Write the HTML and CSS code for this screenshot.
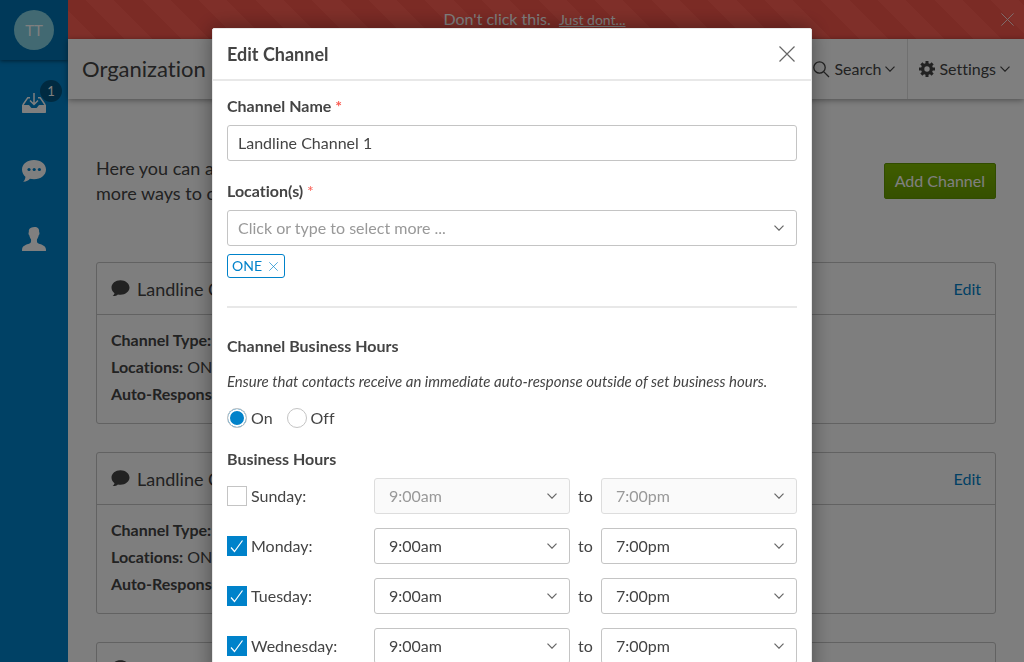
FILE: index.html
```html
<!DOCTYPE html>
<html lang="en">
<head>
<meta charset="utf-8">
<meta name="viewport" content="width=device-width, initial-scale=1">
<title>Edit Channel</title>
<link rel="stylesheet" href="styles.css">
</head>
<body>
<svg class="sprite" aria-hidden="true">
  <symbol id="chevron" viewBox="0 0 10 6"><path d="M.5 .6 5 5.2 9.500 .6" fill="none" stroke="currentColor" stroke-width="1.200"/></symbol>
  <symbol id="cross" viewBox="0 0 16 16"><path d="M.5 .5l15 15M15.500 .5l-15 15" fill="none" stroke="currentColor" stroke-width="1.200"/></symbol>
  <symbol id="bubble" viewBox="0 0 18 17"><path d="M9 .2C4 .2 0 3.400 0 7.600c0 2.300 1.200 4.300 3 5.600-.2 1.200-.9 2.200-1.900 2.800 2 .3 4-.4 5.300-1.500.8.200 1.700.3 2.600.3 5 0 9-3.200 9-7.200S14 .2 9 .2z" fill="currentColor"/></symbol>
</svg>
<div class="app">
  <nav class="sidebar">
    <div class="account"><button class="avatar" type="button">TT</button></div>
    <a class="nav-link" href="#inbox" aria-label="Inbox">
      <svg width="24" height="22" viewBox="0 0 24 22"><path d="M0 13h6.500c1 0 1.300 1 2 2 .7 1 1.200 1 2 1h3c.8 0 1.300 0 2-1 .7-1 1-2 2-2H24v7c0 .8-.4 1-1 1H1c-.6 0-1-.2-1-1z" fill="currentColor"/><path d="M8 5.700H5.800L.8 13M16 5.700h2.200l5 7.300M12 1v11M8 8.500l4 4 4-4" fill="none" stroke="currentColor" stroke-width="1.500"/></svg>
      <span class="badge">1</span>
    </a>
    <a class="nav-link" href="#messages" aria-label="Messages">
      <svg width="24" height="22" viewBox="0 0 24 22"><path d="M12 0C5.200 0 0 4 0 9.500c0 3.200 1.700 5.800 3.400 7.200.1 1.800-.9 3.600-2.200 5.100 3 .1 5.300-1.300 6.700-3 1.300.3 2.700.5 4.100.5 6.800 0 12-4.200 12-9.800S18.800 0 12 0z" fill="currentColor"/><g class="dots"><circle cx="7" cy="9.500" r="1.600"/><circle cx="12.200" cy="9.500" r="1.600"/><circle cx="17.400" cy="9.500" r="1.600"/></g></svg>
    </a>
    <a class="nav-link" href="#contacts" aria-label="Contacts">
      <svg width="24" height="24" viewBox="0 0 24 24"><path d="M12.500 0c3.200 0 5 1.800 4.600 5 .7.500.5 2.800-.5 3.600-.3 1.700-.8 2.700-1.600 3.600-.2 2.300-.1 3.600 1.500 4.300 3 1.200 6.900 2 7.400 5.500l.1 2H0l.1-2c.5-3.500 4.400-4.300 7.400-5.500 1.600-.7 1.700-2 1.500-4.300-.8-.9-1.300-1.900-1.600-3.600-1-.8-1.200-3.100-.5-3.600C6.500 2 8 .6 12.500 0z" fill="currentColor"/></svg>
    </a>
  </nav>
  <div class="page">
    <div class="banner">
      <p class="banner-text">Don't click this. <a class="banner-link" href="#dont">Just dont...</a></p>
      <button class="banner-close" type="button" aria-label="Dismiss"><svg width="13" height="13"><use href="#cross"/></svg></button>
    </div>
    <header class="topbar">
      <h1 class="topbar-title">Organization Channels</h1>
      <button class="topbar-item" type="button">
        <svg width="17" height="17" viewBox="0 0 17 17" fill="none" stroke="currentColor" stroke-width="1.300"><circle cx="6.500" cy="6.500" r="5.700"/><path d="M10.600 10.600l5.400 5.400"/></svg>
        Search
        <svg width="10" height="6"><use href="#chevron"/></svg>
      </button>
      <button class="topbar-item" type="button">
        <svg width="16" height="16" viewBox="0 0 16 16"><g fill="currentColor"><rect x="6.500" width="3" height="16"/><rect y="6.500" width="16" height="3"/><rect x="6.500" width="3" height="16" transform="rotate(45 8 8)"/><rect y="6.500" width="16" height="3" transform="rotate(45 8 8)"/><circle cx="8" cy="8" r="6"/></g><circle class="gear-hole" cx="8" cy="8" r="2.700"/></svg>
        Settings
        <svg width="10" height="6"><use href="#chevron"/></svg>
      </button>
    </header>
    <main class="content">
      <div class="intro">
        <p class="intro-text">Here you can add channels to give contacts<br>more ways to connect with you.</p>
        <button class="add-button" type="button">Add Channel</button>
      </div>
      <article class="card">
        <header class="card-header"><svg width="19" height="17"><use href="#bubble"/></svg><h2 class="card-title">Landline Channel 1</h2><a class="card-edit" href="#edit1">Edit</a></header>
        <div class="card-body"><p><b>Channel Type:</b> Landline</p><p><b>Locations:</b> ONE</p><p><b>Auto-Response:</b> On</p></div>
      </article>
      <article class="card">
        <header class="card-header"><svg width="19" height="17"><use href="#bubble"/></svg><h2 class="card-title">Landline Channel 2</h2><a class="card-edit" href="#edit2">Edit</a></header>
        <div class="card-body"><p><b>Channel Type:</b> Landline</p><p><b>Locations:</b> ONE</p><p><b>Auto-Response:</b> On</p></div>
      </article>
      <article class="card">
        <header class="card-header"><svg width="19" height="17"><use href="#bubble"/></svg><h2 class="card-title">Landline Channel 3</h2><a class="card-edit" href="#edit3">Edit</a></header>
        <div class="card-body"><p><b>Channel Type:</b> Landline</p><p><b>Locations:</b> ONE</p><p><b>Auto-Response:</b> On</p></div>
      </article>
    </main>
  </div>
</div>

<div class="overlay">
  <form class="modal" role="dialog" aria-labelledby="modal-title">
    <header class="modal-header">
      <h2 class="modal-title" id="modal-title">Edit Channel</h2>
      <button class="modal-close" type="button" aria-label="Close"><svg width="16" height="16"><use href="#cross"/></svg></button>
    </header>
    <div class="modal-body">
      <div class="field">
        <label class="label" for="name">Channel Name <span class="required">*</span></label>
        <input class="input" id="name" type="text" value="Landline Channel 1">
      </div>
      <div class="field">
        <label class="label" for="locations">Location(s) <span class="required light">*</span></label>
        <div class="picker">
          <input class="input" id="locations" type="text" placeholder="Click or type to select more ...">
          <svg class="picker-arrow" width="10" height="6"><use href="#chevron"/></svg>
        </div>
        <div class="tags"><button class="tag" type="button">ONE <svg width="9" height="9"><use href="#cross"/></svg></button></div>
      </div>
      <hr class="rule">
      <h3 class="label">Channel Business Hours</h3>
      <p class="hint">Ensure that contacts receive an immediate auto-response outside of set business hours.</p>
      <div class="radios">
        <label class="choice"><input class="radio" type="radio" name="hours" checked>On</label>
        <label class="choice"><input class="radio" type="radio" name="hours">Off</label>
      </div>
      <h3 class="label">Business Hours</h3>
      <div class="days">
        <div class="day">
          <label class="choice"><input class="checkbox" type="checkbox">Sunday:</label>
          <div class="picker"><select class="select" aria-label="Sunday opens" disabled><option>9:00am</option></select><svg class="picker-arrow" width="10" height="6"><use href="#chevron"/></svg></div>
          <span class="to">to</span>
          <div class="picker"><select class="select" aria-label="Sunday closes" disabled><option>7:00pm</option></select><svg class="picker-arrow" width="10" height="6"><use href="#chevron"/></svg></div>
        </div>
        <div class="day">
          <label class="choice"><input class="checkbox" type="checkbox" checked>Monday:</label>
          <div class="picker"><select class="select" aria-label="Monday opens"><option>9:00am</option></select><svg class="picker-arrow" width="10" height="6"><use href="#chevron"/></svg></div>
          <span class="to">to</span>
          <div class="picker"><select class="select" aria-label="Monday closes"><option>7:00pm</option></select><svg class="picker-arrow" width="10" height="6"><use href="#chevron"/></svg></div>
        </div>
        <div class="day">
          <label class="choice"><input class="checkbox" type="checkbox" checked>Tuesday:</label>
          <div class="picker"><select class="select" aria-label="Tuesday opens"><option>9:00am</option></select><svg class="picker-arrow" width="10" height="6"><use href="#chevron"/></svg></div>
          <span class="to">to</span>
          <div class="picker"><select class="select" aria-label="Tuesday closes"><option>7:00pm</option></select><svg class="picker-arrow" width="10" height="6"><use href="#chevron"/></svg></div>
        </div>
        <div class="day">
          <label class="choice"><input class="checkbox" type="checkbox" checked>Wednesday:</label>
          <div class="picker"><select class="select" aria-label="Wednesday opens"><option>9:00am</option></select><svg class="picker-arrow" width="10" height="6"><use href="#chevron"/></svg></div>
          <span class="to">to</span>
          <div class="picker"><select class="select" aria-label="Wednesday closes"><option>7:00pm</option></select><svg class="picker-arrow" width="10" height="6"><use href="#chevron"/></svg></div>
        </div>
      </div>
    </div>
  </form>
</div>
</body>
</html>
```
FILE: styles.css
```css
* { box-sizing: border-box; }
body, h1, h2, h3, p { margin: 0; }
body, button, input, select {
  font-family: Lato, "Liberation Sans", sans-serif;
  font-size: 16px;
  font-variant-ligatures: none;
  line-height: 24px;
  color: #444;
}
button { border: 0; padding: 0; background: none; }
a { color: #0082ca; text-decoration: none; }
svg { display: block; flex: none; }
.sprite { position: absolute; width: 0; height: 0; }

.app { display: flex; height: 100vh; overflow: hidden; }

.sidebar { width: 68px; flex: none; background: #0082ca; }
.account {
  display: flex;
  justify-content: center;
  align-items: center;
  height: 60px;
  background: #0073b2;
  box-shadow: 0 1px 4px rgba(0, 0, 0, .5);
}
.avatar { width: 40px; height: 40px; border-radius: 50%; background: #84d2e4; color: #fff; font-size: 15px; }
.nav-link {
  position: relative;
  display: flex;
  justify-content: center;
  align-items: center;
  height: 68px;
  color: #fff;
}
.account + .nav-link { margin-top: 9px; }
.badge {
  position: absolute;
  top: 11px;
  right: 6px;
  width: 22px;
  border-radius: 11px;
  background: #005582;
  font-size: 13px;
  line-height: 22px;
  text-align: center;
}
.dots { fill: #0082ca; }

.page { flex: 1; min-width: 0; background: #fcfcfc; }
.banner {
  display: flex;
  align-items: center;
  height: 39px;
  padding-right: 10px;
  color: #fff;
  background: repeating-linear-gradient(45deg, #ff5f53 0 20px, #f7564b 20px 40px);
}
.banner-text { flex: 1; text-align: center; }
.banner-link { margin-left: 4px; color: #fff; font-size: 14px; text-decoration: underline; }
.banner-close { color: #fff; opacity: .8; }

.topbar {
  position: relative;
  display: flex;
  align-items: center;
  height: 60px;
  padding: 0 2px 0 14px;
  background: #fff;
  box-shadow: 0 1px 6px rgba(0, 0, 0, .4);
}
.topbar-title { flex: 1; font-size: 22px; font-weight: 400; }
.topbar-item { display: flex; align-items: center; gap: 4px; height: 60px; padding: 0 12px 0 11px; }
.topbar-item + .topbar-item { border-left: 1px solid #e0e0e0; }
.gear-hole { fill: #fff; }

.content { padding: 57px 28px 0; }
.intro { display: flex; justify-content: space-between; align-items: center; margin-bottom: 56px; }
.intro-text { font-size: 18px; line-height: 25px; }
.add-button {
  height: 36px;
  padding: 0 10px;
  border: 1px solid #629900;
  border-radius: 2px;
  background: linear-gradient(#7fba00, #6ba000);
  color: #fff;
}
.card { margin-bottom: 28px; border: 1px solid #c4c4c4; border-radius: 3px; }
.card-header { display: flex; align-items: center; gap: 7px; height: 52px; padding: 0 14px; border-bottom: 1px solid #c4c4c4; }
.card-title { flex: 1; font-size: 18px; font-weight: 400; }
.card-body { padding: 11px 14px 16px; line-height: 27px; }

.overlay { position: fixed; inset: 0; overflow: hidden; padding: 28px 20px; background: rgba(0, 0, 0, .5); }
.modal {
  max-width: 600px;
  margin: 0 auto;
  border: 1px solid #e8e8e8;
  border-radius: 2px;
  background: #fff;
  box-shadow: 0 0 20px rgba(0, 0, 0, .4);
}
.modal-header {
  display: flex;
  justify-content: space-between;
  align-items: center;
  height: 52px;
  padding: 0 16px 0 14px;
  border-bottom: 2px solid #e8e8e8;
}
.modal-title { font-size: 18px; }
.modal-close { color: #666; }
.modal-body { padding: 13px 14px 14px; }
.field { margin-bottom: 18px; }
.label { display: block; margin-bottom: 7px; font-size: 16px; font-weight: 700; }
.required { color: #fa5a50; }
.light { font-weight: 400; }
.input, .select {
  display: block;
  width: 100%;
  height: 36px;
  padding: 0 10px 2px;
  border: 1px solid #c4c4c4;
  border-radius: 3px;
  background: #fff;
  appearance: none;
}
.select { padding: 0 14px; }
.select:disabled { opacity: 1; border-color: #ddd; background: #fafafa; color: #999; }
.input::placeholder { color: #999; }
.picker { display: grid; align-items: center; }
.picker > * { grid-area: 1 / 1; }
.picker-arrow { justify-self: end; margin-right: 13px; color: #666; pointer-events: none; }
.tags { display: flex; margin-top: 8px; }
.tag {
  display: flex;
  align-items: center;
  gap: 7px;
  height: 24px;
  padding: 0 6px 0 4px;
  border: 1px solid #0082ca;
  border-radius: 3px;
  color: #0082ca;
  font-size: 14px;
}
.rule { height: 2px; margin: 28px 0 26px; border: 0; background: #e8e8e8; }
.hint { margin: 11px 0 13px; font-size: 15px; font-style: italic; }
.choice { display: flex; align-items: center; gap: 4px; }
.radios { display: flex; gap: 14px; margin-bottom: 17px; }
.radio, .checkbox { flex: none; width: 20px; height: 20px; margin: 0; border: 1px solid #c4c4c4; background: #fff; appearance: none; }
.radio { border-radius: 50%; }
.radio:checked { background: #0082ca; box-shadow: inset 0 0 0 2px #fff; }
.checkbox:checked {
  border-color: #0082ca;
  background: #0082ca url("data:image/svg+xml,%3Csvg xmlns='http://www.w3.org/2000/svg' viewBox='0 0 18 18'%3E%3Cpath d='M3 10.500l3.500 4L14.500 3.500' fill='none' stroke='white' stroke-width='1.200'/%3E%3C/svg%3E");
}
.days { display: grid; gap: 14px; }
.day { display: grid; grid-template-columns: 147px 1fr 31px 1fr; align-items: center; }
.to { text-align: center; }
```
